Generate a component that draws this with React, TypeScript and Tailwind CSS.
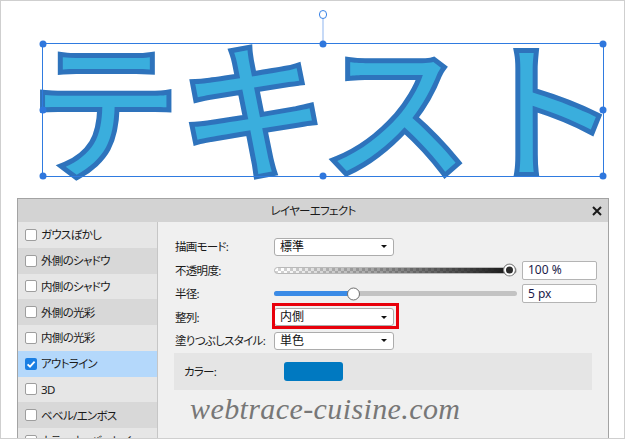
import type { ReactNode } from "react";

const effects = [
  { label: "ガウスぼかし", bg: "bg-[#e6e6e6]" },
  { label: "外側のシャドウ", bg: "bg-[#d8d8d8]" },
  { label: "内側のシャドウ", bg: "bg-[#e6e6e6]" },
  { label: "外側の光彩", bg: "bg-[#d8d8d8]" },
  { label: "内側の光彩", bg: "bg-[#e6e6e6]" },
  { label: "アウトライン", bg: "bg-[#b4d8fb]", checked: true },
  { label: "3D", bg: "bg-[#e6e6e6]" },
  { label: "ベベル/エンボス", bg: "bg-[#d8d8d8]" },
  { label: "カラーオーバーレイ", bg: "bg-[#e6e6e6]" },
];

const handles = [
  "left-0 top-0",
  "left-1/2 top-0",
  "left-full top-0",
  "left-0 top-1/2",
  "left-full top-1/2",
  "left-0 top-full",
  "left-1/2 top-full",
  "left-full top-full",
];

function Canvas() {
  return (
    <div className="relative h-[197px]">
      <div className="whitespace-nowrap pl-[30px] pt-[35px] text-[148px] font-normal leading-none text-[#3aaedd] [font-feature-settings:normal] [-webkit-text-stroke:10px_#2e73bc] [paint-order:stroke_fill]">
        テキスト
      </div>
      {/* selection box */}
      <div className="absolute left-[41px] top-[42px] h-[134px] w-[562px] border border-[#2f7be0]">
        <div className="absolute left-1/2 top-[-27px] h-[26px] w-px -translate-x-1/2 bg-[#8fb6f0]" />
        <div className="absolute left-1/2 top-[-34px] h-[9px] w-[8px] -translate-x-1/2 rounded-full border-[1.5px] border-[#3a84e6] bg-white" />
        {handles.map((h) => (
          <span
            key={h}
            className={`absolute ${h} h-[7px] w-[7px] -translate-x-1/2 -translate-y-1/2 rounded-full bg-[#2f77dd]`}
          />
        ))}
      </div>
    </div>
  );
}

function Check({ checked }: { checked?: boolean }) {
  if (checked) {
    return (
      <span className="flex h-[12px] w-[12px] shrink-0 items-center justify-center rounded-[2px] bg-[#1b7fe3]">
        <svg viewBox="0 0 12 12" className="h-[12px] w-[12px]">
          <path d="M2.6 6.3 5 8.7 9.6 3.6" fill="none" stroke="#fff" strokeWidth="1.8" />
        </svg>
      </span>
    );
  }
  return <span className="h-[12px] w-[12px] shrink-0 rounded-[2px] border border-[#9e9e9e] bg-white" />;
}

function Select({ value }: { value: string }) {
  return (
    <div className="flex h-[18px] w-[120px] items-center justify-between rounded-[3px] border border-[#acacac] bg-white pl-[5px] pr-[6px] text-[12px] text-[#111]">
      <span>{value}</span>
      <span className="h-0 w-0 border-x-[3px] border-t-[3px] border-x-transparent border-t-[#111]" />
    </div>
  );
}

function NumBox({ children }: { children: ReactNode }) {
  return (
    <div className="ml-[5px] flex h-[19px] w-[75px] items-center rounded-[2px] border border-[#b4b4b4] bg-white pl-[5px] text-[12px] tracking-normal text-[#1b1b4a]">
      {children}
    </div>
  );
}

function Row({ label, children }: { label: string; children: ReactNode }) {
  return (
    <div className="flex h-[23.5px] items-center pl-[17px]">
      <span className="w-[99px] whitespace-nowrap text-[11.5px] tracking-[-0.7px] text-[#1a1a1a]">{label}</span>
      {children}
    </div>
  );
}

function Dialog() {
  return (
    <div className="ml-[16px] w-[592px] border border-[#a3a3a3] bg-[#f0f0f0]">
      <div className="relative flex h-[23px] items-center justify-center bg-[#d3d3d3] text-[11.5px] tracking-[-0.7px] text-[#1a1a1a]">
        レイヤーエフェクト
        <svg viewBox="0 0 10 10" className="absolute right-[6px] top-[7px] h-[10px] w-[10px]">
          <path d="M1 1 9 9M9 1 1 9" stroke="#1a1a1a" strokeWidth="2" />
        </svg>
      </div>
      <div className="flex">
        <div className="w-[140px] border-r border-[#c6c6c6]">
          {effects.map((e) => (
            <div key={e.label} className={`flex h-[25.75px] items-center gap-[4px] pl-[7px] text-[11.5px] tracking-[-0.7px] text-[#1a1a1a] ${e.bg}`}>
              <Check checked={e.checked} />
              <span className="whitespace-nowrap">{e.label}</span>
            </div>
          ))}
        </div>
        <div className="flex-1 pt-[13px]">
          <Row label="描画モード:">
            <Select value="標準" />
          </Row>
          <Row label="不透明度:">
            <div className="relative h-[7px] w-[243px] rounded-full border border-[#b9b9b9] [background-image:linear-gradient(to_right,rgba(0,0,0,0)_3%,#1c1c1c_96%),repeating-conic-gradient(#d2d2d2_0_25%,#fff_0_50%)] [background-size:100%_100%,6px_6px]">
              <span className="absolute right-[0px] top-1/2 h-[13px] w-[13px] -translate-y-1/2 rounded-full border border-[#8a8a8a] bg-[#2b2b2b] outline outline-2 -outline-offset-[3px] outline-white" />
            </div>
            <NumBox>100 %</NumBox>
          </Row>
          <Row label="半径:">
            <div className="relative flex h-[5px] w-[243px] rounded-full bg-[#c3c3c3]">
              <div className="h-full w-[79px] rounded-l-full bg-[#3b8be6]" />
              <span className="absolute left-[73px] top-1/2 h-[13px] w-[13px] -translate-y-1/2 rounded-full border border-[#6f6f6f] bg-white" />
            </div>
            <NumBox>5 px</NumBox>
          </Row>
          <Row label="整列:">
            <div className="relative">
              <Select value="内側" />
              <div className="absolute -bottom-[3px] -left-[2px] -right-[5px] -top-[5px] border-[3px] border-[#e8000b]" />
            </div>
          </Row>
          <Row label="塗りつぶしスタイル:">
            <Select value="単色" />
          </Row>
          <div className="ml-[16px] mt-[0.5px] flex h-[37px] w-[418px] items-center bg-[#e5e5e5] pl-[10px] text-[11.5px] tracking-[-0.7px] text-[#1a1a1a]">
            <span className="w-[100px]">カラー:</span>
            <span className="h-[19px] w-[59px] rounded-[3px] bg-[#0079c1]" />
          </div>
          <div className="pl-[32px] pt-[1px] font-['Liberation_Serif',serif] text-[30px] italic leading-[36px] tracking-[0.4px] text-[#777]">
            webtrace-cuisine.com
          </div>
        </div>
      </div>
    </div>
  );
}

export default function App() {
  return (
    <div className="h-[439px] w-[625px] overflow-hidden border border-[#cfcfcf] bg-white font-['Noto_Sans','Noto_Sans_CJK_JP',sans-serif] [font-feature-settings:'palt']">
      <Canvas />
      <Dialog />
    </div>
  );
}
